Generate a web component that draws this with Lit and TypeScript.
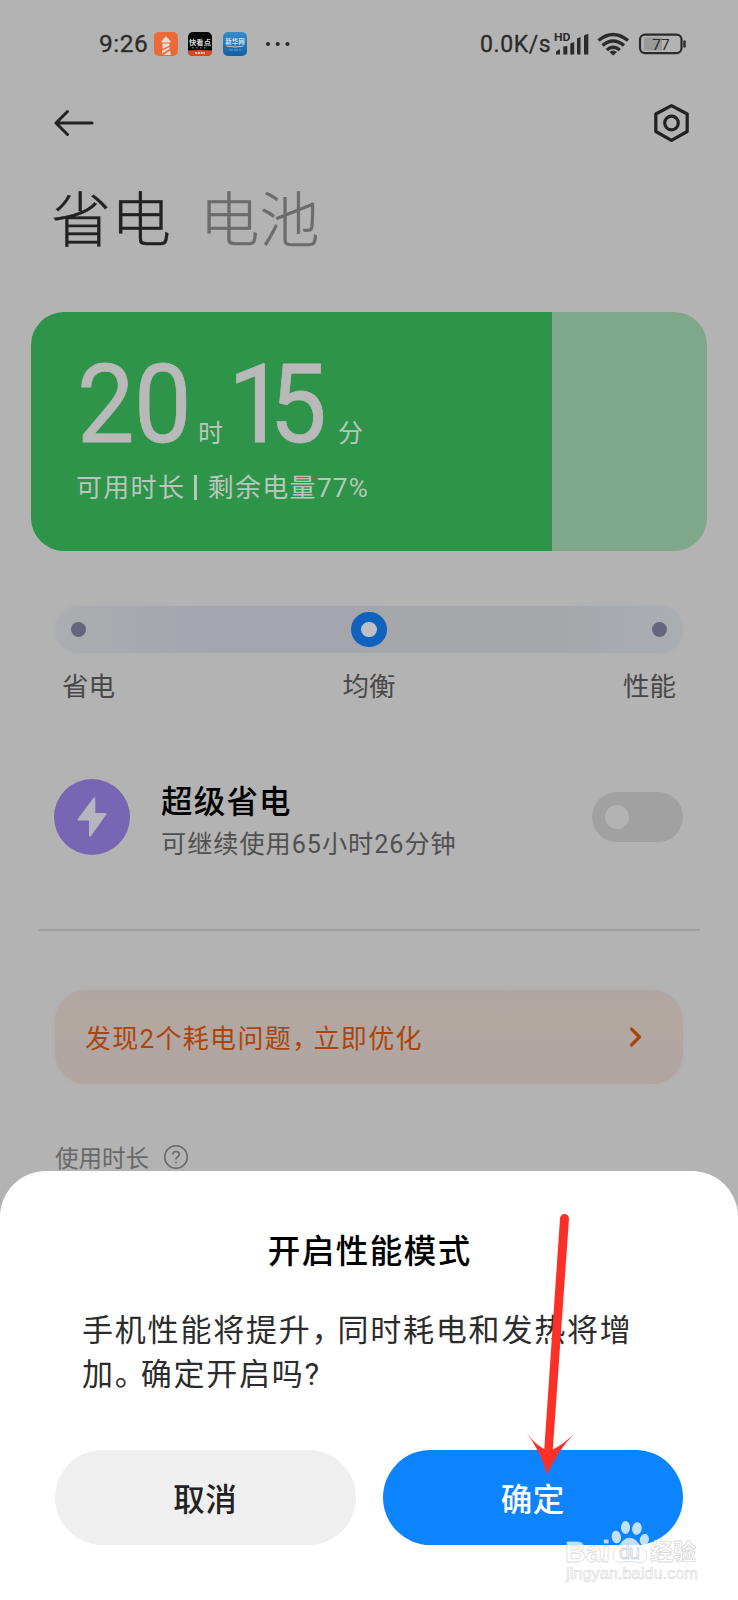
import { LitElement, html, css } from "lit";
import { customElement } from "lit/decorators.js";

@customElement("status-bar")
class StatusBar extends LitElement {
  static styles = css`
    :host { display: flex; align-items: center; height: 88px; padding: 0 51px 0 99px; box-sizing: border-box; color: #2b2b2b; font: 500 24px/28px Roboto, sans-serif; }
    .time { width: 55px; font-size: 24.5px; font-weight: 400; letter-spacing: 0.5px; -webkit-text-stroke: 0.3px #2b2b2b; }
    .app { width: 24px; height: 24px; margin-right: 10.3px; flex: none; }
    .dots { width: 26px; height: 6px; margin-left: 8px; }
    .speed { margin-left: auto; width: 73px; margin-top: 2px; font-size: 23px; font-weight: 400; letter-spacing: 0.6px; white-space: nowrap; -webkit-text-stroke: 0.3px #2b2b2b; }
    .signals { width: 134px; height: 26px; flex: none; }
    text { font-family: "Noto Sans CJK SC", sans-serif; }
    .roboto { font-family: Roboto, sans-serif; }
  `;
  render() {
    return html`
      <span class="time">9:26</span>
      <svg class="app" viewBox="0 0 24 24"><rect width="24" height="24" rx="5" fill="#eb6a35"/><path d="M7.500 10.500V8.500H8.700Q9 6 11.200 5.800V4.500H12.800V5.800Q15 6 15.300 8.500H16.500V10.500ZM8.500 11.500H15.500V13.500L8.500 17ZM15.500 15V17L9 21L8 22.500V18.700ZM16 18.500L17 23H9.500Z" fill="#e4dcd8"/></svg>
      <svg class="app" viewBox="0 0 24 24"><rect width="24" height="24" rx="5" fill="#080808"/><path d="M0 18.500Q12 17.500 24 18.500V19Q24 24 19 24H5Q0 24 0 19Z" fill="#d9481f"/><text x="12" y="13.400" font-size="7.300" font-weight="700" text-anchor="middle" fill="#d5d5d5">快看点</text><path d="M4 15.800h16" stroke="#999" stroke-width="1" stroke-dasharray="1.500 2.500"/><path d="M7 21h10" stroke="#e6bea8" stroke-width="2" stroke-dasharray="2.200 .6"/></svg>
      <svg class="app" viewBox="0 0 24 24"><defs><linearGradient id="b" x2="0" y2="1"><stop stop-color="#368dca"/><stop offset="1" stop-color="#155da5"/></linearGradient></defs><rect width="24" height="24" rx="5" fill="url(#b)"/><text x="12" y="11.500" font-size="6.500" font-weight="700" text-anchor="middle" fill="#d4e0ea">新华网</text><path d="M3.500 14Q12 16 20.500 14" stroke="#b5cfe2" fill="none"/><path d="M6 18h12" stroke="#6b9fc9" stroke-dasharray="4 1"/></svg>
      <svg class="dots" viewBox="0 0 26 6"><g fill="#2b2b2b"><circle cx="3" cy="3" r="2.100"/><circle cx="12.700" cy="3" r="2.100"/><circle cx="22.500" cy="3" r="2.100"/></g></svg>
      <span class="speed">0.0K/s</span>
      <svg class="signals" viewBox="553 31 134 26">
        <text class="roboto" x="554" y="41" font-size="10.500" font-weight="700" fill="#2b2b2b" textLength="16.500" lengthAdjust="spacingAndGlyphs">HD</text>
        <path d="M556 54.500V51.500L560 49V54.500ZM563.300 54.500V46.500L567.300 46V54.500ZM570.300 54.500V43.500L574.200 42V54.500ZM577 54.500V38.500L580.500 37V54.500ZM584 54.500V35.500L588.300 33.800V54.500Z" fill="#2b2b2b"/>
        <g fill="none" stroke="#2b2b2b" stroke-width="3.500"><path d="M598.500 40.500Q613 28.500 628 40.500"/><path d="M602.500 45.500Q613 36.500 624 45.500"/><path d="M606.800 50Q613 44.500 619.800 50"/></g><path d="M609.300 52Q613.200 48.800 617 52L613.200 55.500Z" fill="#2b2b2b"/>
        <rect x="644" y="37.500" width="18" height="13" rx="1" fill="#999"/>
        <rect x="640" y="34.600" width="41.500" height="18.500" rx="5" fill="none" stroke="#2b2b2b" stroke-width="2.200"/><path d="M684.500 41.500v5" stroke="#2b2b2b" stroke-width="2.400" stroke-linecap="round"/>
        <text class="roboto" x="661" y="49.700" font-size="15.500" font-weight="400" text-anchor="middle" fill="#2b2b2b">77</text>
      </svg>`;
  }
}

@customElement("battery-card")
class BatteryCard extends LitElement {
  static styles = css`
    :host { display: block; margin: 0 31px; height: 239px; border-radius: 33px; box-sizing: border-box; padding: 41px 0 0 45px; color: #b8c7bb; font-family: Roboto, "Noto Sans CJK SC", sans-serif; background: linear-gradient(90deg, #2e944a 0 521px, #7fa78a 521px); }
    .duration { display: flex; align-items: baseline; height: 104px; line-height: 104px; white-space: nowrap; color: #b9b9b9; }
    .num { font-size: 109px; letter-spacing: -0.500px; transform: scaleX(0.94); transform-origin: left; -webkit-text-stroke: 0.8px #b9b9b9; }
    .hours { width: 121px; margin-left: 1px; }
    .minutes { width: 110px; margin-left: -2px; }
    .one { letter-spacing: -17.500px; }
    .unit { font-size: 25px; width: 32px; color: #b8c7bb; }
    .caption { margin-top: 13px; font-size: 26px; line-height: 36px; letter-spacing: 1.3px; white-space: nowrap; display: flex; }
    .bar { width: 2.500px; height: 25px; background: #b8c7bb; margin: 5px 11px 0 9px; }
  `;
  render() {
    return html`
      <div class="duration"><span class="num hours">20</span><span class="unit">时</span><span class="num minutes"><span class="one">1</span>5</span><span class="unit">分</span></div>
      <div class="caption"><span>可用时长</span><span class="bar"></span><span>剩余电量77%</span></div>`;
  }
}

@customElement("mode-slider")
class ModeSlider extends LitElement {
  static styles = css`
    :host { display: block; margin: 55px 55px 0; }
    .track { height: 47px; border-radius: 24px; background: linear-gradient(90deg, #acadb0, #a5a5ae 25%, #a5a5ae 48%, #a5a7ab 52%, #a5a7ab 80%, #aaaeb3); display: flex; align-items: center; justify-content: space-between; padding: 0 16px; box-shadow: 0 0 3px #aaacae; }
    .stop { width: 15px; height: 15px; border-radius: 50%; background: #66657e; }
    .current { width: 15.500px; height: 15.500px; border: 10.200px solid #1062bd; background: #bdc1c5; border-radius: 50%; }
    .labels { display: flex; justify-content: space-between; padding: 0 7px; margin-top: 13px; font: 26.500px/38px "Noto Sans CJK SC", sans-serif; color: #484848; }
  `;
  render() {
    return html`<div class="track"><span class="stop"></span><span class="current"></span><span class="stop"></span></div>
      <div class="labels"><span>省电</span><span>均衡</span><span>性能</span></div>`;
  }
}

@customElement("confirm-sheet")
class ConfirmSheet extends LitElement {
  static styles = css`
    :host { position: absolute; left: 0; right: 0; top: 1171px; bottom: 0; background: #fff; border-radius: 46px 46px 0 0; font-family: Roboto, "Noto Sans CJK SC", sans-serif; box-sizing: border-box; padding: 57px 55px 0; }
    .title { margin: 0; text-align: center; font-size: 32.500px; line-height: 48px; letter-spacing: 1.500px; text-indent: 1.500px; font-weight: 500; color: #000; }
    .message { margin: 33px 0 0 27px; font-size: 31px; line-height: 44px; letter-spacing: 1.800px; color: #2c2c2c; white-space: nowrap; }
    .message p { margin: 0; }
    .tight { letter-spacing: -5.200px; }
    .actions { display: flex; gap: 27px; margin-top: 53px; }
    .button { flex: 1; height: 95px; border: 0; padding: 0; border-radius: 48px; background: #efefef; color: #222; font: 500 31.500px/95px "Noto Sans CJK SC", sans-serif; letter-spacing: 0.500px; }
    .primary { background: #0c83ff; color: #fff; }
  `;
  render() {
    return html`<h2 class="title">开启性能模式</h2>
      <div class="message"><p>手机性能将提升<span class="tight">，</span>同时耗电和发热将增</p><p>加<span class="tight">。</span>确定开启吗?</p></div>
      <div class="actions"><button class="button">取消</button><button class="button primary">确定</button></div>`;
  }
}

@customElement("app-root")
class AppRoot extends LitElement {
  static styles = css`
    :host { display: block; position: relative; width: 738px; height: 1600px; overflow: hidden; background: #b3b3b3; font-family: Roboto, "Noto Sans CJK SC", sans-serif; }
    .nav { display: flex; justify-content: space-between; align-items: center; height: 70px; padding: 0 48px 0 53px; }
    .back { width: 42px; height: 30px; }
    .gear { width: 37px; height: 40px; }
    .tabs { display: flex; gap: 28.500px; padding-left: 51px; margin-top: 14px; height: 140px; font: 300 60px/88px "Noto Sans CJK SC", sans-serif; color: #222; -webkit-text-stroke: 0.3px; }
    .off { color: #6c6c6c; }
    .saver { display: flex; align-items: center; margin: 75px 55px 0 54px; height: 76px; }
    .bolt { width: 76px; height: 76px; flex: none; margin-right: 31px; }
    .name { font-size: 31.500px; line-height: 44px; font-weight: 500; letter-spacing: 1.200px; color: #000; }
    .detail { font-size: 25.200px; line-height: 38px; letter-spacing: 0.950px; margin-top: 1px; color: #505050; }
    .copy { margin-top: 10px; white-space: nowrap; }
    .toggle { margin-left: auto; width: 91px; height: 50px; border-radius: 25px; background: #a1a1a1; display: flex; align-items: center; padding-left: 13px; box-sizing: border-box; }
    .knob { width: 24px; height: 24px; border-radius: 50%; background: #b3b3b3; }
    .rule { height: 1.500px; margin: 74px 38px 0; background: #9f9f9f; }
    .alert { margin: 59px 55px 0; height: 94px; border-radius: 31px; background: linear-gradient(#b1a6a2, #b3a8a0 35%, #b1a6a2 65%, #b0a5a1); display: flex; align-items: center; justify-content: space-between; padding: 0 41px 0 30px; box-sizing: border-box; box-shadow: 0 0 3px #b2aaa7; color: #ab450e; font-size: 26px; letter-spacing: 1.300px; }
    .tight { letter-spacing: -4.500px; }
    .chevron { width: 13px; height: 22px; }
    .usage { display: flex; align-items: center; gap: 14px; height: 36px; margin: 55px 55px 0; font-size: 23.500px; color: #686868; }
    .help { width: 26px; height: 26px; }
    .pointer { position: absolute; left: 520px; top: 1210px; width: 60px; height: 270px; }
    .watermark { position: absolute; left: 560px; top: 1515px; width: 146px; height: 75px; }
  `;
  render() {
    return html`
      <status-bar></status-bar>
      <div class="nav">
        <svg class="back" viewBox="0 0 42 30"><path d="M39 15H3M14.500 3.500L3 15L14.500 26.500" fill="none" stroke="#222" stroke-width="3" stroke-linecap="round" stroke-linejoin="round"/></svg>
        <svg class="gear" viewBox="0 0 37 40"><path d="M18.500 2.700L34.200 11V28.500L18.500 37.300L2.800 28.500V11Z" fill="none" stroke="#222" stroke-width="3.200" stroke-linejoin="round"/><circle cx="18.500" cy="20" r="6.800" fill="none" stroke="#222" stroke-width="3.200"/></svg>
      </div>
      <div class="tabs"><span>省电</span><span class="off">电池</span></div>
      <battery-card></battery-card>
      <mode-slider></mode-slider>
      <div class="saver">
        <svg class="bolt" viewBox="0 0 76 76"><circle cx="38" cy="38" r="38" fill="#7766b4"/><path d="M39 19.500Q41 17 41.300 20V34H51Q53.500 34 52 36L37 57Q35 58.500 35 56V41.500H25Q22.800 41.500 24 39.500Z" fill="#b6b4bc"/></svg>
        <div class="copy"><div class="name">超级省电</div><div class="detail">可继续使用65小时26分钟</div></div>
        <span class="toggle"><span class="knob"></span></span>
      </div>
      <div class="rule"></div>
      <div class="alert"><span>发现2个耗电问题<span class="tight">，</span>立即优化</span>
        <svg class="chevron" viewBox="0 0 13 22"><path d="M2.500 3L10.500 11L2.500 19" fill="none" stroke="#ab450e" stroke-width="3.200" stroke-linecap="round" stroke-linejoin="round"/></svg></div>
      <div class="usage"><span>使用时长</span>
        <svg class="help" viewBox="0 0 26 26"><circle cx="13" cy="13" r="11.300" fill="none" stroke="#686868" stroke-width="1.500"/><path d="M9.800 10.500Q9.800 7.500 13 7.500T16.300 10.500Q16.300 12 14.500 13T13 15.700M13 17.800V19.300" fill="none" stroke="#686868" stroke-width="1.600"/></svg></div>
      <confirm-sheet></confirm-sheet>
      <svg class="pointer" viewBox="520 1210 60 270"><path d="M560 1218.500Q560.500 1214 564.500 1214T569 1218.500L552.800 1449.500Q562 1445 572.800 1435Q557 1452 547 1474.500Q540 1450 526 1432Q535 1444.500 544.300 1449Z" fill="#fd3028"/></svg>
      <svg class="watermark" viewBox="560 1515 146 75">
        <g fill="#fff" fill-opacity=".75" stroke="#cfcfcf" stroke-width=".8" stroke-opacity=".8" font-family="Liberation Sans, sans-serif">
          <text x="565" y="1561.500" font-size="29" font-weight="700" textLength="45" lengthAdjust="spacingAndGlyphs">Bai</text>
          <g stroke="none"><ellipse cx="616.300" cy="1537" rx="4.700" ry="6.300" transform="rotate(-10 616 1537)"/><ellipse cx="625.500" cy="1527.500" rx="4.500" ry="6.500"/><ellipse cx="637" cy="1528.500" rx="4.800" ry="6.300" transform="rotate(10 637 1528)"/><ellipse cx="644.500" cy="1539.500" rx="4.500" ry="5.800" transform="rotate(15 644 1539)"/></g>
          <path d="M629.500 1538Q634.500 1538 638 1543Q640 1546 644 1549.500Q649 1555 645.500 1560Q642 1564 635 1562Q629.500 1561 624 1562Q616 1564 613.500 1558Q612 1552 617 1547.500Q620 1545 622.500 1541.500Q625.500 1538 629.500 1538Z"/>
          <text x="650" y="1560" font-size="23" textLength="46" lengthAdjust="spacingAndGlyphs" font-family="Noto Sans CJK SC, sans-serif" font-weight="700">经验</text>
          <text x="566" y="1579" font-size="16" textLength="132" lengthAdjust="spacingAndGlyphs" stroke-width=".6">jingyan.baidu.com</text>
          <text x="619" y="1558.500" font-size="20" stroke="#b9c6d4" textLength="21">du</text>
        </g>
      </svg>`;
  }
}
